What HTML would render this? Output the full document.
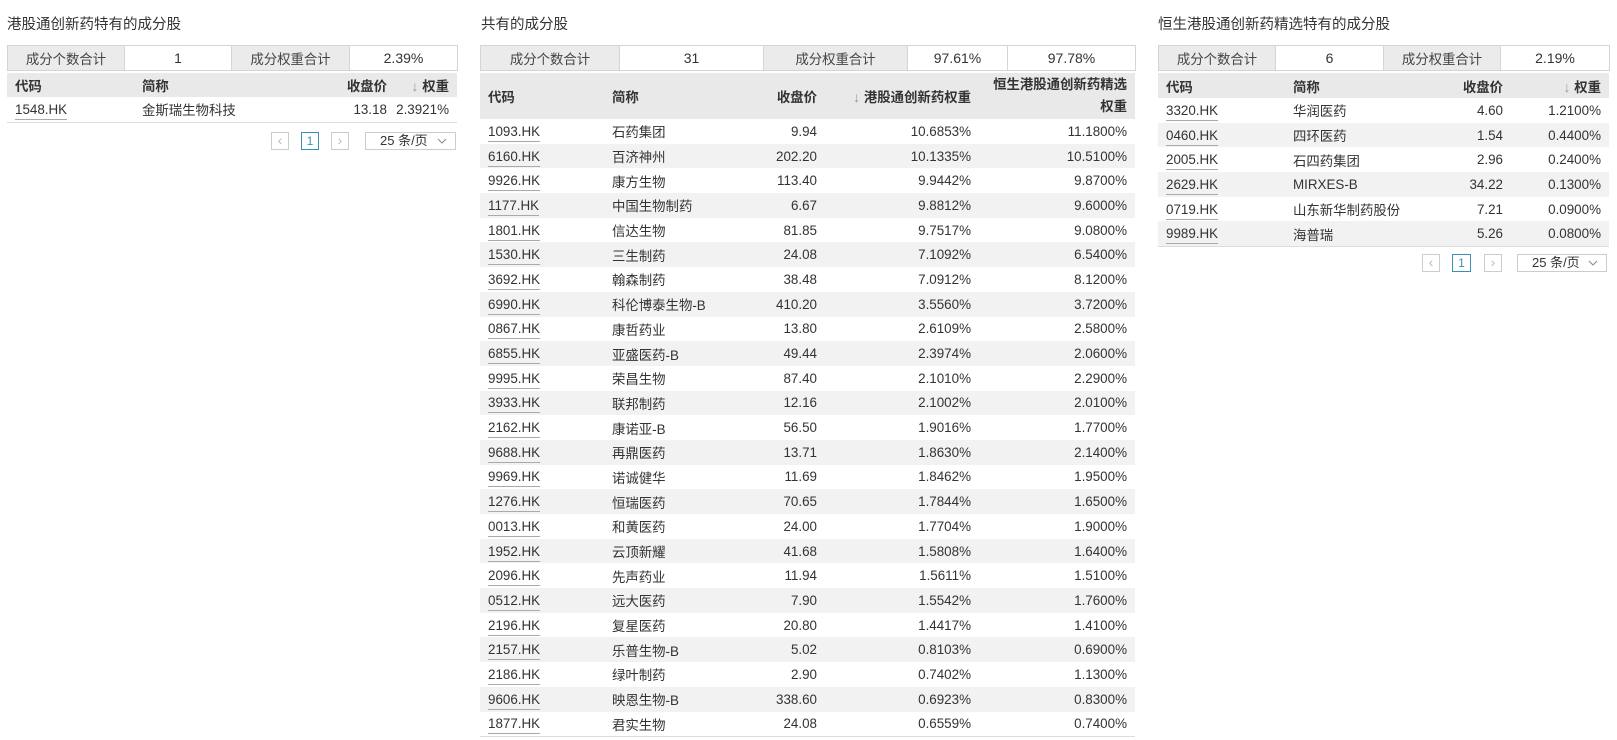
<!DOCTYPE html>
<html><head><meta charset="utf-8"><style>
*{margin:0;padding:0;box-sizing:border-box}
body{width:1617px;height:740px;background:#fff;font-family:"Liberation Sans","Noto Sans CJK SC",sans-serif;color:#333;font-size:13.4px;position:relative;overflow:hidden}
.title{position:absolute;top:13px;font-size:14.5px;color:#333}
table{position:absolute;border-collapse:collapse;table-layout:fixed}
td,th{padding:0 8px;white-space:nowrap;overflow:hidden;vertical-align:middle}
.sum td{border:1px solid #d4d4d4;text-align:center;height:25px;font-size:13.4px}
.sum td.l{background:#ebebeb;color:#444;vertical-align:top;padding-top:2px}
.sum td.v{font-size:14px}
.dt th{background:#e9e9e9;font-weight:bold;text-align:left;color:#333}
.dt th.r,.dt td.r{text-align:right}
.dt tr.z td{background:#f2f2f2}
.dt{border-bottom:1px solid #ddd}
.dt td.w,.dt th.w{padding-left:0}
.code{text-decoration:underline;text-decoration-color:#aaa;text-underline-offset:5px}
.pg{position:absolute;border:1px solid #ccc;height:18px;font-size:14px;color:#bbb;text-align:center;line-height:15px}
.pg.cur{border-color:#3a8fb7;color:#3a8fb7;font-size:12px;line-height:16px}
.sel{position:absolute;border:1px solid #ccc;height:18px;font-size:13px;color:#333;line-height:16px;padding-left:14px}
.sel svg{position:absolute;right:8px;top:5px}
.arr{color:#999;font-weight:normal;font-size:14px}
</style></head><body>

<div class="title" style="left:7px">港股通创新药特有的成分股</div>
<table class="sum" style="left:7px;top:45px;width:450px"><colgroup><col style="width:117px"><col style="width:107px"><col style="width:118px"><col style="width:108px"></colgroup>
<tr><td class="l">成分个数合计</td><td class="v">1</td><td class="l">成分权重合计</td><td class="v">2.39%</td></tr></table>
<table class="dt" style="left:7px;top:73px;width:450px"><colgroup><col style="width:127px"><col style="width:166px"><col style="width:95px"><col style="width:62px"></colgroup>
<tr style="height:24px"><th>代码</th><th>简称</th><th class="r">收盘价</th><th class="r w"><span class="arr">↓</span> 权重</th></tr>
<tr style="height:25px"><td><span class="code">1548.HK</span></td><td>金斯瑞生物科技</td><td class="r">13.18</td><td class="r w">2.3921%</td></tr>
</table>
<div class="pg" style="left:271px;top:132px;width:18px">‹</div>
<div class="pg cur" style="left:301px;top:132px;width:18px">1</div>
<div class="pg" style="left:331px;top:132px;width:18px">›</div>
<div class="sel" style="left:365px;top:132px;width:91px">25 条/页<svg width="10" height="6" viewBox="0 0 10 6"><path d="M1 1l4 4 4-4" fill="none" stroke="#888" stroke-width="1"/></svg></div>

<div class="title" style="left:481px">共有的成分股</div>
<table class="sum" style="left:480px;top:45px;width:655px"><colgroup><col style="width:139px"><col style="width:144px"><col style="width:144px"><col style="width:100px"><col style="width:128px"></colgroup>
<tr><td class="l">成分个数合计</td><td class="v">31</td><td class="l">成分权重合计</td><td class="v">97.61%</td><td class="v">97.78%</td></tr></table>
<table class="dt" style="left:480px;top:73px;width:655px"><colgroup><col style="width:124px"><col style="width:116px"><col style="width:105px"><col style="width:154px"><col style="width:156px"></colgroup>
<tr style="height:46px"><th>代码</th><th>简称</th><th class="r">收盘价</th><th class="r"><span class="arr">↓</span> 港股通创新药权重</th><th class="r" style="line-height:22px">恒生港股通创新药精选<br>权重</th></tr>
<tr style="height:24.7px"><td><span class="code">1093.HK</span></td><td>石药集团</td><td class="r">9.94</td><td class="r">10.6853%</td><td class="r">11.1800%</td></tr>
<tr class="z" style="height:24.7px"><td><span class="code">6160.HK</span></td><td>百济神州</td><td class="r">202.20</td><td class="r">10.1335%</td><td class="r">10.5100%</td></tr>
<tr style="height:24.7px"><td><span class="code">9926.HK</span></td><td>康方生物</td><td class="r">113.40</td><td class="r">9.9442%</td><td class="r">9.8700%</td></tr>
<tr class="z" style="height:24.7px"><td><span class="code">1177.HK</span></td><td>中国生物制药</td><td class="r">6.67</td><td class="r">9.8812%</td><td class="r">9.6000%</td></tr>
<tr style="height:24.7px"><td><span class="code">1801.HK</span></td><td>信达生物</td><td class="r">81.85</td><td class="r">9.7517%</td><td class="r">9.0800%</td></tr>
<tr class="z" style="height:24.7px"><td><span class="code">1530.HK</span></td><td>三生制药</td><td class="r">24.08</td><td class="r">7.1092%</td><td class="r">6.5400%</td></tr>
<tr style="height:24.7px"><td><span class="code">3692.HK</span></td><td>翰森制药</td><td class="r">38.48</td><td class="r">7.0912%</td><td class="r">8.1200%</td></tr>
<tr class="z" style="height:24.7px"><td><span class="code">6990.HK</span></td><td>科伦博泰生物-B</td><td class="r">410.20</td><td class="r">3.5560%</td><td class="r">3.7200%</td></tr>
<tr style="height:24.7px"><td><span class="code">0867.HK</span></td><td>康哲药业</td><td class="r">13.80</td><td class="r">2.6109%</td><td class="r">2.5800%</td></tr>
<tr class="z" style="height:24.7px"><td><span class="code">6855.HK</span></td><td>亚盛医药-B</td><td class="r">49.44</td><td class="r">2.3974%</td><td class="r">2.0600%</td></tr>
<tr style="height:24.7px"><td><span class="code">9995.HK</span></td><td>荣昌生物</td><td class="r">87.40</td><td class="r">2.1010%</td><td class="r">2.2900%</td></tr>
<tr class="z" style="height:24.7px"><td><span class="code">3933.HK</span></td><td>联邦制药</td><td class="r">12.16</td><td class="r">2.1002%</td><td class="r">2.0100%</td></tr>
<tr style="height:24.7px"><td><span class="code">2162.HK</span></td><td>康诺亚-B</td><td class="r">56.50</td><td class="r">1.9016%</td><td class="r">1.7700%</td></tr>
<tr class="z" style="height:24.7px"><td><span class="code">9688.HK</span></td><td>再鼎医药</td><td class="r">13.71</td><td class="r">1.8630%</td><td class="r">2.1400%</td></tr>
<tr style="height:24.7px"><td><span class="code">9969.HK</span></td><td>诺诚健华</td><td class="r">11.69</td><td class="r">1.8462%</td><td class="r">1.9500%</td></tr>
<tr class="z" style="height:24.7px"><td><span class="code">1276.HK</span></td><td>恒瑞医药</td><td class="r">70.65</td><td class="r">1.7844%</td><td class="r">1.6500%</td></tr>
<tr style="height:24.7px"><td><span class="code">0013.HK</span></td><td>和黄医药</td><td class="r">24.00</td><td class="r">1.7704%</td><td class="r">1.9000%</td></tr>
<tr class="z" style="height:24.7px"><td><span class="code">1952.HK</span></td><td>云顶新耀</td><td class="r">41.68</td><td class="r">1.5808%</td><td class="r">1.6400%</td></tr>
<tr style="height:24.7px"><td><span class="code">2096.HK</span></td><td>先声药业</td><td class="r">11.94</td><td class="r">1.5611%</td><td class="r">1.5100%</td></tr>
<tr class="z" style="height:24.7px"><td><span class="code">0512.HK</span></td><td>远大医药</td><td class="r">7.90</td><td class="r">1.5542%</td><td class="r">1.7600%</td></tr>
<tr style="height:24.7px"><td><span class="code">2196.HK</span></td><td>复星医药</td><td class="r">20.80</td><td class="r">1.4417%</td><td class="r">1.4100%</td></tr>
<tr class="z" style="height:24.7px"><td><span class="code">2157.HK</span></td><td>乐普生物-B</td><td class="r">5.02</td><td class="r">0.8103%</td><td class="r">0.6900%</td></tr>
<tr style="height:24.7px"><td><span class="code">2186.HK</span></td><td>绿叶制药</td><td class="r">2.90</td><td class="r">0.7402%</td><td class="r">1.1300%</td></tr>
<tr class="z" style="height:24.7px"><td><span class="code">9606.HK</span></td><td>映恩生物-B</td><td class="r">338.60</td><td class="r">0.6923%</td><td class="r">0.8300%</td></tr>
<tr style="height:24.7px"><td><span class="code">1877.HK</span></td><td>君实生物</td><td class="r">24.08</td><td class="r">0.6559%</td><td class="r">0.7400%</td></tr>
</table>

<div class="title" style="left:1158px">恒生港股通创新药精选特有的成分股</div>
<table class="sum" style="left:1158px;top:45px;width:451px"><colgroup><col style="width:117px"><col style="width:108px"><col style="width:117px"><col style="width:109px"></colgroup>
<tr><td class="l">成分个数合计</td><td class="v">6</td><td class="l">成分权重合计</td><td class="v">2.19%</td></tr></table>
<table class="dt" style="left:1158px;top:73px;width:451px"><colgroup><col style="width:127px"><col style="width:135px"><col style="width:91px"><col style="width:98px"></colgroup>
<tr style="height:25px"><th>代码</th><th>简称</th><th class="r">收盘价</th><th class="r"><span class="arr">↓</span> 权重</th></tr>
<tr style="height:24.7px"><td><span class="code">3320.HK</span></td><td>华润医药</td><td class="r">4.60</td><td class="r">1.2100%</td></tr>
<tr class="z" style="height:24.7px"><td><span class="code">0460.HK</span></td><td>四环医药</td><td class="r">1.54</td><td class="r">0.4400%</td></tr>
<tr style="height:24.7px"><td><span class="code">2005.HK</span></td><td>石四药集团</td><td class="r">2.96</td><td class="r">0.2400%</td></tr>
<tr class="z" style="height:24.7px"><td><span class="code">2629.HK</span></td><td>MIRXES-B</td><td class="r">34.22</td><td class="r">0.1300%</td></tr>
<tr style="height:24.7px"><td><span class="code">0719.HK</span></td><td>山东新华制药股份</td><td class="r">7.21</td><td class="r">0.0900%</td></tr>
<tr class="z" style="height:24.7px"><td><span class="code">9989.HK</span></td><td>海普瑞</td><td class="r">5.26</td><td class="r">0.0800%</td></tr>
</table>
<div class="pg" style="left:1422px;top:254px;width:18px">‹</div>
<div class="pg cur" style="left:1452px;top:254px;width:19px">1</div>
<div class="pg" style="left:1484px;top:254px;width:18px">›</div>
<div class="sel" style="left:1517px;top:254px;width:90px">25 条/页<svg width="10" height="6" viewBox="0 0 10 6"><path d="M1 1l4 4 4-4" fill="none" stroke="#888" stroke-width="1"/></svg></div>

</body></html>
